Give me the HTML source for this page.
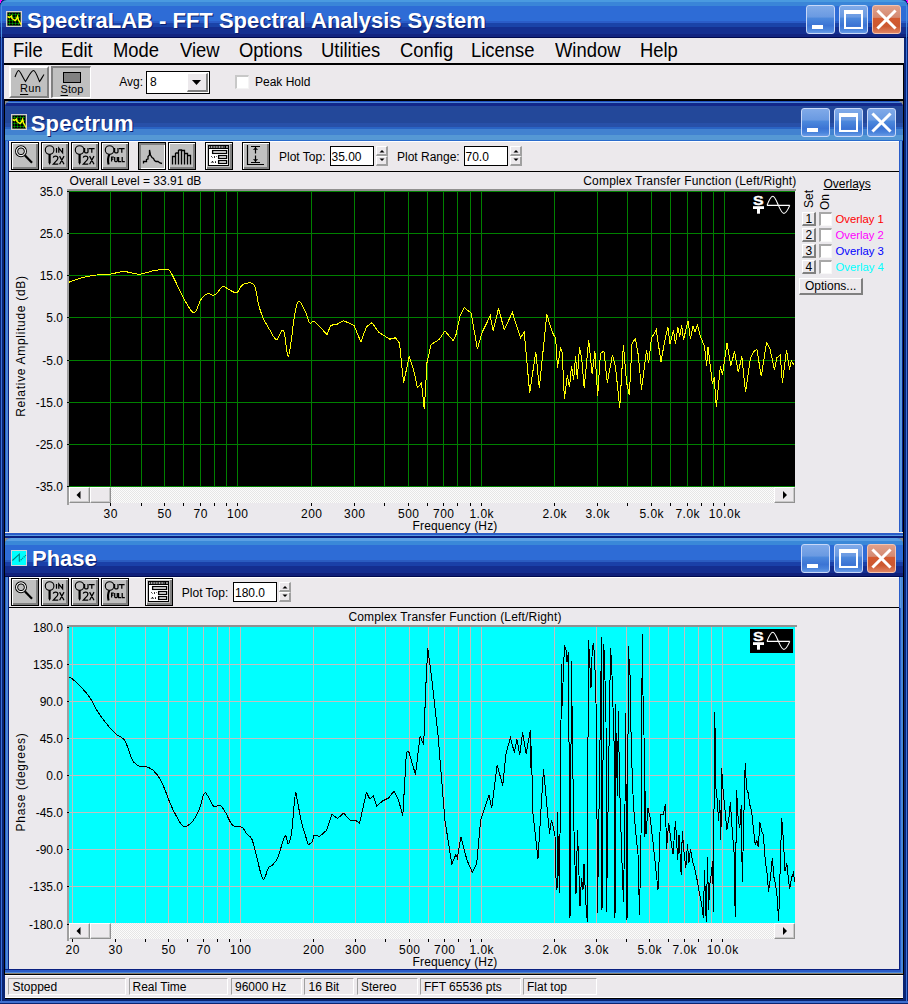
<!DOCTYPE html><html><head><meta charset="utf-8"><style>
html,body{margin:0;padding:0;}body{width:908px;height:1004px;overflow:hidden;position:relative;background:#0a2472;font-family:"Liberation Sans",sans-serif;}
.t{position:absolute;white-space:nowrap;font-family:"Liberation Sans",sans-serif;}
.r{position:absolute;box-sizing:border-box;}
svg.a{position:absolute;overflow:visible;}
.rz{position:absolute;box-sizing:border-box;background:#c0c0c0;border:1px solid #000;box-shadow:inset 1px 1px 0 #fff,inset -2px -2px 0 #808080;}
.pz{position:absolute;box-sizing:border-box;background:#c0c0c0;border:1px solid #000;box-shadow:inset 2px 2px 0 #808080,inset -1px -1px 0 #fff;}
.edit{position:absolute;box-sizing:border-box;background:#fff;border:1px solid #000;}
.sunk{position:absolute;box-sizing:border-box;border-top:1px solid #a0a0a0;border-left:1px solid #a0a0a0;border-bottom:1px solid #fff;border-right:1px solid #fff;}
.sb{position:absolute;box-sizing:border-box;background:#ece9ec;border-left:1px solid #fff;border-top:1px solid #fff;border-right:1px solid #909090;border-bottom:1px solid #909090;box-shadow:inset -1px -1px 0 #c8c8c8;}
.xb{position:absolute;box-sizing:border-box;border:1px solid #c8d8f8;border-radius:3px;}
</style></head><body>
<div class="r" style="left:0px;top:0px;width:908px;height:1004px;background:#0a2472;"></div>
<div class="r" style="left:1px;top:38px;width:1px;height:963px;background:#3a70d8;"></div>
<div class="r" style="left:906px;top:38px;width:1px;height:963px;background:#3a70d8;"></div>
<div class="r" style="left:0px;top:1001px;width:908px;height:2px;background:#4070d0;"></div>
<div class="r" style="left:4px;top:101px;width:1px;height:874px;background:#000;"></div>
<div class="r" style="left:903px;top:101px;width:1px;height:874px;background:#000;"></div>
<div class="r" style="left:0px;top:0px;width:908px;height:38px;border-radius:7px 7px 0 0;background:linear-gradient(to bottom,#4a9ae0 0px,#4a9ae0 2px,#3a85d8 2px,#3a85d8 6px,#2e6cd6 6px,#2e6cd6 21px,#2a5cc8 21px,#2a5cc8 23px,#1a43a8 23px,#1a43a8 27px,#142f90 27px,#142f90 34px,#122480 34px,#122480 37px,#000a50 37px,#000a50 38px);"></div>
<div class="r" style="left:1px;top:5px;width:1px;height:33px;background:#4a90e0;"></div>
<div class="r" style="left:906px;top:5px;width:1px;height:33px;background:#4a90e0;"></div>
<div class="r" style="left:0px;top:0px;width:2px;height:1px;background:#f0f;"></div>
<div class="r" style="left:0px;top:1px;width:1px;height:2px;background:#f0f;"></div>
<div class="r" style="left:906px;top:0px;width:2px;height:1px;background:#f0f;"></div>
<div class="r" style="left:907px;top:1px;width:1px;height:2px;background:#f0f;"></div>
<svg class="a" style="left:6px;top:11px;" width="16" height="16" viewBox="0 0 16 16"><rect x="0" y="0" width="16" height="16" fill="#d4d0d0"/><rect x="1" y="1" width="14" height="14" fill="#909090"/><rect x="1.5" y="1.5" width="13" height="13" fill="#000"/><line x1="3.5" y1="1.5" x2="3.5" y2="14.5" stroke="#00a000" stroke-width="1" stroke-dasharray="1 0.5"/><line x1="1.5" y1="3.5" x2="14.5" y2="3.5" stroke="#00a000" stroke-width="1" stroke-dasharray="1 0.5"/><line x1="6.5" y1="1.5" x2="6.5" y2="14.5" stroke="#00a000" stroke-width="1" stroke-dasharray="1 0.5"/><line x1="1.5" y1="6.5" x2="14.5" y2="6.5" stroke="#00a000" stroke-width="1" stroke-dasharray="1 0.5"/><line x1="9.5" y1="1.5" x2="9.5" y2="14.5" stroke="#00a000" stroke-width="1" stroke-dasharray="1 0.5"/><line x1="1.5" y1="9.5" x2="14.5" y2="9.5" stroke="#00a000" stroke-width="1" stroke-dasharray="1 0.5"/><line x1="12.5" y1="1.5" x2="12.5" y2="14.5" stroke="#00a000" stroke-width="1" stroke-dasharray="1 0.5"/><line x1="1.5" y1="12.5" x2="14.5" y2="12.5" stroke="#00a000" stroke-width="1" stroke-dasharray="1 0.5"/><polyline points="1.5,5.5 3.5,6.5 5.5,5 6,7.5 7.5,8.5 9,9.5 10.5,8 11.5,5.5 12.5,9 14,11.5 15,13.5" fill="none" stroke="#ffff00" stroke-width="1.4"/></svg>
<div class="t" style="left:27px;top:9.98px;font-size:22px;line-height:22px;color:#fff;font-weight:bold;text-shadow:1px 1px 0 #0a1e6e;">SpectraLAB - FFT Spectral Analysis System</div>
<div class="xb" style="left:806px;top:5px;width:29px;height:29px;background:linear-gradient(to bottom,#80aae8 0%,#6a9ae2 40%,#4c88dc 46%,#3c74d4 72%,#4a84dc 88%,#6a9ce6 100%);"></div>
<div class="r" style="left:812px;top:25px;width:11px;height:4px;background:#fff;"></div>
<div class="xb" style="left:839px;top:5px;width:29px;height:29px;background:linear-gradient(to bottom,#80aae8 0%,#6a9ae2 40%,#4c88dc 46%,#3c74d4 72%,#4a84dc 88%,#6a9ce6 100%);"></div>
<div class="r" style="left:844px;top:10px;width:19px;height:19px;border:2px solid #fff;border-top-width:4px;"></div>
<div class="xb" style="left:872px;top:5px;width:29px;height:29px;background:linear-gradient(to bottom,#e0a08a 0%,#d48a72 42%,#d45a30 46%,#cc5830 75%,#e08462 100%);border-color:#f4c4b0;"></div>
<svg class="a" style="left:876px;top:9px;" width="21" height="21" viewBox="0 0 21 21"><path d="M2.5 2.5 L18.5 18.5 M18.5 2.5 L2.5 18.5" stroke="#fff" stroke-width="3" stroke-linecap="square"/></svg>
<div class="r" style="left:4px;top:38px;width:900px;height:25px;background:#ece9ec;"></div>
<div class="r" style="left:4px;top:63px;width:900px;height:2px;background:#000;"></div>
<div class="t" style="left:12.5px;top:39.97px;font-size:20px;line-height:20px;color:#000;transform:scaleX(0.92);transform-origin:0 0;">File</div>
<div class="t" style="left:60.5px;top:39.97px;font-size:20px;line-height:20px;color:#000;transform:scaleX(0.92);transform-origin:0 0;">Edit</div>
<div class="t" style="left:112.5px;top:39.97px;font-size:20px;line-height:20px;color:#000;transform:scaleX(0.92);transform-origin:0 0;">Mode</div>
<div class="t" style="left:180.0px;top:39.97px;font-size:20px;line-height:20px;color:#000;transform:scaleX(0.92);transform-origin:0 0;">View</div>
<div class="t" style="left:238.5px;top:39.97px;font-size:20px;line-height:20px;color:#000;transform:scaleX(0.92);transform-origin:0 0;">Options</div>
<div class="t" style="left:321.0px;top:39.97px;font-size:20px;line-height:20px;color:#000;transform:scaleX(0.92);transform-origin:0 0;">Utilities</div>
<div class="t" style="left:399.5px;top:39.97px;font-size:20px;line-height:20px;color:#000;transform:scaleX(0.92);transform-origin:0 0;">Config</div>
<div class="t" style="left:471.0px;top:39.97px;font-size:20px;line-height:20px;color:#000;transform:scaleX(0.92);transform-origin:0 0;">License</div>
<div class="t" style="left:555.0px;top:39.97px;font-size:20px;line-height:20px;color:#000;transform:scaleX(0.92);transform-origin:0 0;">Window</div>
<div class="t" style="left:639.5px;top:39.97px;font-size:20px;line-height:20px;color:#000;transform:scaleX(0.92);transform-origin:0 0;">Help</div>
<div class="r" style="left:4px;top:65px;width:900px;height:34px;background:#ece9ec;border-right:1px solid #000;"></div>
<div class="r" style="left:4px;top:99px;width:900px;height:2px;background:#000;"></div>
<div class="r" style="left:9px;top:66px;width:40px;height:32px;background:#c0c0c0;border-top:2px solid #fff;border-left:2px solid #fff;border-bottom:2px solid #808080;border-right:2px solid #808080;"></div>
<svg class="a" style="left:9px;top:66px;" width="40" height="20" viewBox="0 0 40 20"><path d="M6 11 C7.5 7, 8.5 4.5, 9.5 4.5 C11 4.5, 14 12, 16.5 15.5 C19 12, 22 4.5, 24.5 4.5 C26.5 4.5, 29 12, 30.5 15.5 C32 14, 33.5 10.5, 35 8.5" fill="none" stroke="#000" stroke-width="1.1"/></svg>
<div class="t" style="left:20px;top:83.29px;font-size:11px;line-height:11px;color:#000;letter-spacing:0.3px;"><u style="text-underline-offset:1.5px">R</u>un</div>
<div class="r" style="left:51px;top:66px;width:40px;height:32px;background:#c0c0c0;border-top:2px solid #808080;border-left:2px solid #808080;border-bottom:1px solid #fff;border-right:1px solid #fff;"></div>
<div class="r" style="left:63px;top:72px;width:18px;height:11px;background:#808080;border:1px solid #000;"></div>
<div class="t" style="left:60.5px;top:84.09px;font-size:11px;line-height:11px;color:#000;letter-spacing:0.1px;"><u style="text-underline-offset:1.5px">S</u>top</div>
<div class="t" style="left:119.2px;top:76.34px;font-size:12px;line-height:12px;color:#000;">Avg:</div>
<div class="edit" style="left:146px;top:71px;width:64px;height:23px;"></div>
<div class="t" style="left:150px;top:76.34px;font-size:12px;line-height:12px;color:#000;">8</div>
<div class="r" style="left:187px;top:73px;width:21px;height:19px;background:#ece9ec;border-top:1px solid #fff;border-left:1px solid #fff;border-bottom:2px solid #808080;border-right:2px solid #808080;"></div>
<svg class="a" style="left:191px;top:79px;" width="12" height="8" viewBox="0 0 12 8"><path d="M1 1 L10 1 L5.5 6 Z" fill="#000"/></svg>
<div class="r" style="left:235px;top:75px;width:14px;height:14px;background:#fff;border-top:2px solid #c8c8c8;border-left:2px solid #c8c8c8;border-bottom:1px solid #f4f4f4;border-right:1px solid #f4f4f4;"></div>
<div class="t" style="left:255px;top:76.34px;font-size:12px;line-height:12px;color:#000;">Peak Hold</div>
<div class="r" style="left:5px;top:101px;width:6px;height:6px;background:#8c8c8c;"></div>
<div class="r" style="left:897px;top:101px;width:6px;height:6px;background:#8c8c8c;"></div>
<div class="r" style="left:5px;top:107px;width:898px;height:431px;background:#2a5cc8;"></div>
<div class="r" style="left:5px;top:101px;width:898px;height:20px;background:#2a5cc8;border-radius:6px 6px 0 0;"></div>
<div class="r" style="left:6px;top:107px;width:2px;height:431px;background:#4a88d8;"></div>
<div class="r" style="left:8px;top:107px;width:1px;height:431px;background:#0a2080;"></div>
<div class="r" style="left:900px;top:107px;width:2px;height:431px;background:#5a9ae0;"></div>
<div class="r" style="left:902px;top:107px;width:1px;height:431px;background:#0a2080;"></div>
<div class="r" style="left:5px;top:101px;width:898px;height:40px;border-radius:6px 6px 0 0;background:linear-gradient(to bottom,#2050c0 0px,#2050c0 1px,#4a88d8 1px,#4a88d8 2px,#12288a 2px,#12288a 5px,#23489a 5px,#23489a 22px,#2850a8 22px,#2850a8 26px,#2a64c4 26px,#2a64c4 28px,#4282d0 28px,#4282d0 34px,#5598d4 34px,#5598d4 39px,#2a6ccc 39px,#2a6ccc 40px);"></div>
<svg class="a" style="left:11px;top:114px;" width="16" height="16" viewBox="0 0 16 16"><rect x="0" y="0" width="16" height="16" fill="#d4d0d0"/><rect x="1" y="1" width="14" height="14" fill="#909090"/><rect x="1.5" y="1.5" width="13" height="13" fill="#000"/><line x1="3.5" y1="1.5" x2="3.5" y2="14.5" stroke="#00a000" stroke-width="1" stroke-dasharray="1 0.5"/><line x1="1.5" y1="3.5" x2="14.5" y2="3.5" stroke="#00a000" stroke-width="1" stroke-dasharray="1 0.5"/><line x1="6.5" y1="1.5" x2="6.5" y2="14.5" stroke="#00a000" stroke-width="1" stroke-dasharray="1 0.5"/><line x1="1.5" y1="6.5" x2="14.5" y2="6.5" stroke="#00a000" stroke-width="1" stroke-dasharray="1 0.5"/><line x1="9.5" y1="1.5" x2="9.5" y2="14.5" stroke="#00a000" stroke-width="1" stroke-dasharray="1 0.5"/><line x1="1.5" y1="9.5" x2="14.5" y2="9.5" stroke="#00a000" stroke-width="1" stroke-dasharray="1 0.5"/><line x1="12.5" y1="1.5" x2="12.5" y2="14.5" stroke="#00a000" stroke-width="1" stroke-dasharray="1 0.5"/><line x1="1.5" y1="12.5" x2="14.5" y2="12.5" stroke="#00a000" stroke-width="1" stroke-dasharray="1 0.5"/><polyline points="1.5,5.5 3.5,6.5 5.5,5 6,7.5 7.5,8.5 9,9.5 10.5,8 11.5,5.5 12.5,9 14,11.5 15,13.5" fill="none" stroke="#ffff00" stroke-width="1.4"/></svg>
<div class="t" style="left:30.7px;top:113.38px;font-size:22px;line-height:22px;color:#fff;font-weight:bold;text-shadow:1px 1px 0 #0a1e6e;letter-spacing:0.2px;">Spectrum</div>
<div class="xb" style="left:801px;top:108px;width:29px;height:29px;background:linear-gradient(to bottom,#80aae8 0%,#6a9ae2 40%,#4c88dc 46%,#3c74d4 72%,#4a84dc 88%,#6a9ce6 100%);"></div>
<div class="r" style="left:807px;top:128px;width:11px;height:4px;background:#fff;"></div>
<div class="xb" style="left:834px;top:108px;width:29px;height:29px;background:linear-gradient(to bottom,#80aae8 0%,#6a9ae2 40%,#4c88dc 46%,#3c74d4 72%,#4a84dc 88%,#6a9ce6 100%);"></div>
<div class="r" style="left:839px;top:113px;width:19px;height:19px;border:2px solid #fff;border-top-width:4px;"></div>
<div class="xb" style="left:867px;top:108px;width:29px;height:29px;background:linear-gradient(to bottom,#80aae8 0%,#6a9ae2 40%,#4c88dc 46%,#3c74d4 72%,#4a84dc 88%,#6a9ce6 100%);"></div>
<svg class="a" style="left:871px;top:112px;" width="21" height="21" viewBox="0 0 21 21"><path d="M2.5 2.5 L18.5 18.5 M18.5 2.5 L2.5 18.5" stroke="#fff" stroke-width="3" stroke-linecap="square"/></svg>
<div class="r" style="left:9px;top:141px;width:890px;height:31px;background:#ece9ec;border-top:1px solid #fff;"></div>
<div class="r" style="left:9px;top:171px;width:890px;height:1px;background:#000;"></div>
<div class="r" style="left:9px;top:172px;width:890px;height:360px;background:#ebe9ed;"></div>
<div class="r" style="left:5px;top:532px;width:898px;height:1px;background:#f4ece8;"></div>
<div class="r" style="left:5px;top:533px;width:898px;height:2px;background:#2a5cc8;"></div>
<div class="r" style="left:5px;top:535px;width:898px;height:1px;background:#5a9ae0;"></div>
<div class="r" style="left:5px;top:536px;width:898px;height:2px;background:#0a2080;"></div>
<div class="r" style="left:5px;top:538px;width:6px;height:6px;background:#8c8c8c;"></div>
<div class="r" style="left:897px;top:538px;width:6px;height:6px;background:#8c8c8c;"></div>
<div class="r" style="left:5px;top:544px;width:898px;height:430px;background:#2a5cc8;"></div>
<div class="r" style="left:5px;top:538px;width:898px;height:20px;background:#2a5cc8;border-radius:6px 6px 0 0;"></div>
<div class="r" style="left:6px;top:544px;width:2px;height:430px;background:#4a88d8;"></div>
<div class="r" style="left:8px;top:544px;width:1px;height:430px;background:#0a2080;"></div>
<div class="r" style="left:900px;top:544px;width:2px;height:430px;background:#5a9ae0;"></div>
<div class="r" style="left:902px;top:544px;width:1px;height:430px;background:#0a2080;"></div>
<div class="r" style="left:5px;top:538px;width:898px;height:39px;border-radius:6px 6px 0 0;background:linear-gradient(to bottom,#5aa0e4 0px,#5aa0e4 3px,#3a88d8 3px,#3a88d8 7px,#2e6cd6 7px,#2e6cd6 22px,#2a5cc0 22px,#2a5cc0 24px,#1a40a8 24px,#1a40a8 28px,#142e90 28px,#142e90 35px,#10207a 35px,#10207a 38px,#000a50 38px,#000a50 39px);"></div>
<div class="t" style="left:32px;top:548.38px;font-size:22px;line-height:22px;color:#fff;font-weight:bold;text-shadow:1px 1px 0 #0a1e6e;">Phase</div>
<div class="xb" style="left:801px;top:544px;width:29px;height:29px;background:linear-gradient(to bottom,#80aae8 0%,#6a9ae2 40%,#4c88dc 46%,#3c74d4 72%,#4a84dc 88%,#6a9ce6 100%);"></div>
<div class="r" style="left:807px;top:564px;width:11px;height:4px;background:#fff;"></div>
<div class="xb" style="left:834px;top:544px;width:29px;height:29px;background:linear-gradient(to bottom,#80aae8 0%,#6a9ae2 40%,#4c88dc 46%,#3c74d4 72%,#4a84dc 88%,#6a9ce6 100%);"></div>
<div class="r" style="left:839px;top:549px;width:19px;height:19px;border:2px solid #fff;border-top-width:4px;"></div>
<div class="xb" style="left:867px;top:544px;width:29px;height:29px;background:linear-gradient(to bottom,#e0a08a 0%,#d48a72 42%,#d45a30 46%,#cc5830 75%,#e08462 100%);border-color:#f4c4b0;"></div>
<svg class="a" style="left:871px;top:548px;" width="21" height="21" viewBox="0 0 21 21"><path d="M2.5 2.5 L18.5 18.5 M18.5 2.5 L2.5 18.5" stroke="#fff" stroke-width="3" stroke-linecap="square"/></svg>
<div class="r" style="left:9px;top:577px;width:890px;height:31px;background:#ece9ec;border-top:1px solid #fff;"></div>
<div class="r" style="left:9px;top:607px;width:890px;height:1px;background:#000;"></div>
<div class="r" style="left:9px;top:608px;width:890px;height:361px;background:#ebe9ed;"></div>
<div class="r" style="left:5px;top:969px;width:898px;height:1px;background:#0a2080;"></div>
<div class="r" style="left:5px;top:970px;width:898px;height:2px;background:#2a5cc8;"></div>
<div class="r" style="left:5px;top:972px;width:898px;height:1px;background:#4a88d8;"></div>
<div class="r" style="left:5px;top:973px;width:898px;height:1px;background:#8a8070;"></div>
<div class="r" style="left:899px;top:608px;width:1px;height:362px;background:#0a2080;"></div>
<div class="r" style="left:900px;top:608px;width:1px;height:364px;background:#2a5cc8;"></div>
<div class="r" style="left:901px;top:577px;width:2px;height:396px;background:#4a88d8;"></div>
<svg class="a" style="left:11px;top:550px;" width="16" height="16" viewBox="0 0 16 16"><rect x="0" y="0" width="16" height="16" fill="#d8d4d4"/><rect x="1" y="1" width="14" height="14" fill="#0ff"/><polyline points="1.4,10.5 8.3,4.2 8.3,11.4" fill="none" stroke="#008080" stroke-width="1.1"/><path d="M8.3 11.4 L14.9 5.2" stroke="#008080" stroke-width="1.2" stroke-dasharray="1.2 0.8"/></svg>
<div class="r" style="left:67px;top:189px;width:729px;height:2px;background:#909090;"></div>
<div class="r" style="left:67px;top:189px;width:2px;height:316px;background:#a0a0a0;"></div>
<div class="r" style="left:69px;top:191px;width:726px;height:296px;background:#000;"></div>
<svg class="a" style="left:69px;top:191px;shape-rendering:crispEdges;" width="726" height="296" viewBox="0 0 726 296"><rect x="0" y="0" width="726" height="1" fill="#008000"/><rect x="0" y="42" width="726" height="1" fill="#008000"/><rect x="0" y="84" width="726" height="1" fill="#008000"/><rect x="0" y="126" width="726" height="1" fill="#008000"/><rect x="0" y="169" width="726" height="1" fill="#008000"/><rect x="0" y="211" width="726" height="1" fill="#008000"/><rect x="0" y="253" width="726" height="1" fill="#008000"/><rect x="0" y="295" width="726" height="1" fill="#008000"/><rect x="41" y="0" width="1" height="296" fill="#008000"/><rect x="72" y="0" width="1" height="296" fill="#008000"/><rect x="95" y="0" width="1" height="296" fill="#008000"/><rect x="114" y="0" width="1" height="296" fill="#008000"/><rect x="131" y="0" width="1" height="296" fill="#008000"/><rect x="145" y="0" width="1" height="296" fill="#008000"/><rect x="157" y="0" width="1" height="296" fill="#008000"/><rect x="168" y="0" width="1" height="296" fill="#008000"/><rect x="242" y="0" width="1" height="296" fill="#008000"/><rect x="285" y="0" width="1" height="296" fill="#008000"/><rect x="315" y="0" width="1" height="296" fill="#008000"/><rect x="339" y="0" width="1" height="296" fill="#008000"/><rect x="358" y="0" width="1" height="296" fill="#008000"/><rect x="374" y="0" width="1" height="296" fill="#008000"/><rect x="388" y="0" width="1" height="296" fill="#008000"/><rect x="401" y="0" width="1" height="296" fill="#008000"/><rect x="412" y="0" width="1" height="296" fill="#008000"/><rect x="485" y="0" width="1" height="296" fill="#008000"/><rect x="528" y="0" width="1" height="296" fill="#008000"/><rect x="558" y="0" width="1" height="296" fill="#008000"/><rect x="582" y="0" width="1" height="296" fill="#008000"/><rect x="601" y="0" width="1" height="296" fill="#008000"/><rect x="618" y="0" width="1" height="296" fill="#008000"/><rect x="632" y="0" width="1" height="296" fill="#008000"/><rect x="644" y="0" width="1" height="296" fill="#008000"/><rect x="655" y="0" width="1" height="296" fill="#008000"/></svg>
<div class="r" style="left:69px;top:487px;width:726px;height:16px;background-color:#f4f4f4;background-image:repeating-conic-gradient(#fcfcfc 0 25%,#e6e6e6 0 50%);background-size:2px 2px;"></div>
<div class="sb" style="left:69px;top:487px;width:21px;height:16px;"></div>
<div class="sb" style="left:90px;top:487px;width:21px;height:16px;"></div>
<div class="sb" style="left:774px;top:487px;width:21px;height:16px;"></div>
<svg class="a" style="left:76px;top:491px;" width="6" height="8" viewBox="0 0 6 8"><path d="M4.5 0 L4.5 8 L0.5 4 Z" fill="#000"/></svg>
<svg class="a" style="left:781.5px;top:491px;" width="6" height="8" viewBox="0 0 6 8"><path d="M1 0 L1 8 L5 4 Z" fill="#000"/></svg>
<svg class="a" style="left:60px;top:503px;" width="740" height="3" viewBox="0 0 740 3"><rect x="50" y="0" width="1" height="3" fill="#000"/><rect x="81" y="0" width="1" height="3" fill="#000"/><rect x="104" y="0" width="1" height="3" fill="#000"/><rect x="123" y="0" width="1" height="3" fill="#000"/><rect x="140" y="0" width="1" height="3" fill="#000"/><rect x="154" y="0" width="1" height="3" fill="#000"/><rect x="166" y="0" width="1" height="3" fill="#000"/><rect x="177" y="0" width="1" height="3" fill="#000"/><rect x="251" y="0" width="1" height="3" fill="#000"/><rect x="294" y="0" width="1" height="3" fill="#000"/><rect x="324" y="0" width="1" height="3" fill="#000"/><rect x="348" y="0" width="1" height="3" fill="#000"/><rect x="367" y="0" width="1" height="3" fill="#000"/><rect x="383" y="0" width="1" height="3" fill="#000"/><rect x="397" y="0" width="1" height="3" fill="#000"/><rect x="410" y="0" width="1" height="3" fill="#000"/><rect x="421" y="0" width="1" height="3" fill="#000"/><rect x="494" y="0" width="1" height="3" fill="#000"/><rect x="537" y="0" width="1" height="3" fill="#000"/><rect x="567" y="0" width="1" height="3" fill="#000"/><rect x="591" y="0" width="1" height="3" fill="#000"/><rect x="610" y="0" width="1" height="3" fill="#000"/><rect x="627" y="0" width="1" height="3" fill="#000"/><rect x="641" y="0" width="1" height="3" fill="#000"/><rect x="653" y="0" width="1" height="3" fill="#000"/><rect x="664" y="0" width="1" height="3" fill="#000"/></svg>
<div class="t" style="left:63px;top:186.14px;font-size:12px;line-height:12px;color:#000;transform:translateX(-100%);">35.0</div>
<div class="t" style="left:63px;top:228.14px;font-size:12px;line-height:12px;color:#000;transform:translateX(-100%);">25.0</div>
<div class="t" style="left:63px;top:270.14px;font-size:12px;line-height:12px;color:#000;transform:translateX(-100%);">15.0</div>
<div class="t" style="left:63px;top:312.14px;font-size:12px;line-height:12px;color:#000;transform:translateX(-100%);">5.0</div>
<div class="t" style="left:63px;top:355.14px;font-size:12px;line-height:12px;color:#000;transform:translateX(-100%);">-5.0</div>
<div class="t" style="left:63px;top:397.14px;font-size:12px;line-height:12px;color:#000;transform:translateX(-100%);">-15.0</div>
<div class="t" style="left:63px;top:439.14px;font-size:12px;line-height:12px;color:#000;transform:translateX(-100%);">-25.0</div>
<div class="t" style="left:63px;top:481.14px;font-size:12px;line-height:12px;color:#000;transform:translateX(-100%);">-35.0</div>
<div class="t" style="left:110.75px;top:508.14px;font-size:12px;line-height:12px;color:#000;transform:translateX(-50%);letter-spacing:0.5px;">30</div>
<div class="t" style="left:164.75px;top:508.14px;font-size:12px;line-height:12px;color:#000;transform:translateX(-50%);letter-spacing:0.5px;">50</div>
<div class="t" style="left:200.75px;top:508.14px;font-size:12px;line-height:12px;color:#000;transform:translateX(-50%);letter-spacing:0.5px;">70</div>
<div class="t" style="left:237.75px;top:508.14px;font-size:12px;line-height:12px;color:#000;transform:translateX(-50%);letter-spacing:0.5px;">100</div>
<div class="t" style="left:311.75px;top:508.14px;font-size:12px;line-height:12px;color:#000;transform:translateX(-50%);letter-spacing:0.5px;">200</div>
<div class="t" style="left:354.75px;top:508.14px;font-size:12px;line-height:12px;color:#000;transform:translateX(-50%);letter-spacing:0.5px;">300</div>
<div class="t" style="left:408.75px;top:508.14px;font-size:12px;line-height:12px;color:#000;transform:translateX(-50%);letter-spacing:0.5px;">500</div>
<div class="t" style="left:443.75px;top:508.14px;font-size:12px;line-height:12px;color:#000;transform:translateX(-50%);letter-spacing:0.5px;">700</div>
<div class="t" style="left:481.75px;top:508.14px;font-size:12px;line-height:12px;color:#000;transform:translateX(-50%);letter-spacing:0.5px;">1.0k</div>
<div class="t" style="left:554.75px;top:508.14px;font-size:12px;line-height:12px;color:#000;transform:translateX(-50%);letter-spacing:0.5px;">2.0k</div>
<div class="t" style="left:597.75px;top:508.14px;font-size:12px;line-height:12px;color:#000;transform:translateX(-50%);letter-spacing:0.5px;">3.0k</div>
<div class="t" style="left:651.75px;top:508.14px;font-size:12px;line-height:12px;color:#000;transform:translateX(-50%);letter-spacing:0.5px;">5.0k</div>
<div class="t" style="left:687.75px;top:508.14px;font-size:12px;line-height:12px;color:#000;transform:translateX(-50%);letter-spacing:0.5px;">7.0k</div>
<div class="t" style="left:724.75px;top:508.14px;font-size:12px;line-height:12px;color:#000;transform:translateX(-50%);letter-spacing:0.5px;">10.0k</div>
<div class="t" style="left:455px;top:520.04px;font-size:12px;line-height:12px;color:#000;transform:translateX(-50%);letter-spacing:0.17px;">Frequency (Hz)</div>
<div class="t" style="left:69.6px;top:175.14px;font-size:12px;line-height:12px;color:#000;">Overall Level = 33.91 dB</div>
<div class="t" style="left:796.5px;top:175.14px;font-size:12px;line-height:12px;color:#000;transform:translateX(-100%);letter-spacing:0.17px;">Complex Transfer Function (Left/Right)</div>
<div class="t" style="left:20.5px;top:345.5px;font-size:12px;line-height:12px;letter-spacing:0.7px;transform:translate(-50%,-50%) rotate(-90deg);">Relative Amplitude (dB)</div>
<svg class="a" style="left:750px;top:193px;" width="43" height="24" viewBox="0 0 43 24"><text x="3" y="12" font-family="Liberation Sans" font-weight="bold" font-size="13" fill="#fff" stroke="#fff" stroke-width="0.4" transform="translate(3,0) scale(1.22,1) translate(-3,0)">S</text><rect x="3" y="13.2" width="11" height="2.8" fill="#fff"/><rect x="7" y="15.5" width="3" height="5.2" fill="#fff"/><path d="M17 12.4 H39.8 M17 12.4 C19 7, 21 3.2, 22.9 3.2 C24.8 3.2, 26.5 8, 28.4 12.4 C30.3 16.8, 32 20.4, 33.9 20.4 C35.8 20.4, 37.8 17, 39.8 12.4" fill="none" stroke="#fff" stroke-width="1.1"/></svg>
<div class="r" style="left:67px;top:191px;width:2px;height:1px;background:#000;"></div>
<div class="r" style="left:67px;top:233px;width:2px;height:1px;background:#000;"></div>
<div class="r" style="left:67px;top:275px;width:2px;height:1px;background:#000;"></div>
<div class="r" style="left:67px;top:317px;width:2px;height:1px;background:#000;"></div>
<div class="r" style="left:67px;top:360px;width:2px;height:1px;background:#000;"></div>
<div class="r" style="left:67px;top:402px;width:2px;height:1px;background:#000;"></div>
<div class="r" style="left:67px;top:444px;width:2px;height:1px;background:#000;"></div>
<div class="r" style="left:67px;top:486px;width:2px;height:1px;background:#000;"></div>
<svg class="a" style="left:69px;top:191px;overflow:hidden;" width="726" height="296" viewBox="0 0 726 296"><path d="M-0.80 91.50 C1.13 90.82 6.58 88.60 10.80 87.40 C15.02 86.20 19.47 85.00 24.50 84.30 C29.53 83.60 35.95 83.83 41.00 83.20 C46.05 82.57 49.97 80.50 54.80 80.50 C59.63 80.50 64.95 83.35 70.00 83.20 C75.05 83.05 80.75 80.33 85.10 79.60 C89.45 78.87 93.35 78.57 96.10 78.80 C98.85 79.03 98.38 76.03 101.60 81.00 C104.82 85.97 111.50 101.80 115.40 108.60 C119.30 115.40 122.25 121.80 125.00 121.80 C127.75 121.80 129.60 111.82 131.90 108.60 C134.20 105.38 136.73 103.20 138.80 102.50 C140.87 101.80 142.70 104.53 144.30 104.40 C145.90 104.27 146.80 103.17 148.40 101.70 C150.00 100.23 151.83 96.05 153.90 95.60 C155.97 95.15 158.50 97.98 160.80 99.00 C163.10 100.02 165.63 102.50 167.70 101.70 C169.77 100.90 171.13 95.82 173.20 94.20 C175.27 92.58 178.03 91.90 180.10 92.00 C182.17 92.10 184.00 91.13 185.60 94.80 C187.20 98.47 188.32 108.72 189.70 114.00 C191.08 119.28 192.07 122.37 193.90 126.50 C195.73 130.63 198.42 135.13 200.70 138.80 C202.98 142.47 205.30 148.40 207.60 148.50 C209.90 148.60 212.52 136.65 214.50 139.40 C216.48 142.15 217.67 167.40 219.50 165.00 C221.33 162.60 223.80 134.17 225.50 125.00 C227.20 115.83 227.87 110.67 229.70 110.00 C231.53 109.33 234.67 117.33 236.50 121.00 C238.33 124.67 239.27 130.45 240.70 132.00 C242.13 133.55 243.22 129.43 245.10 130.30 L252.00 137.20 L258.10 143.50 L261.60 134.40 L268.50 133.00 L274.60 129.70 L285.00 134.40 L291.90 151.00 L297.40 135.80 L303.00 131.70 L309.80 141.30 L320.80 148.20 L326.40 146.80 L330.50 152.30 L334.60 192.20 L340.10 165.50 L344.20 177.10 L348.40 196.40 L352.50 192.20 L355.30 218.40 L358.00 171.60 L362.10 153.70 L370.40 148.20 L375.90 139.90 L384.20 149.60 L386.90 144.00 L391.10 124.80 L395.20 116.50 L402.10 122.00 L408.40 157.80 L413.10 141.30 L421.30 124.80 L424.10 139.90 L429.60 117.10 L435.10 138.60 L439.20 130.30 L443.40 121.50 L446.10 130.30 L451.60 146.80 L455.20 141.30 L460.70 201.90 L466.80 160.60 L470.30 196.90 L477.80 123.40 L483.30 141.30 L486.70 147.50 L488.50 176.50 L491.50 157.20 L493.20 161.30 L495.40 208.10 L498.40 184.00 L500.50 196.40 L502.50 175.10 L504.60 188.80 L506.60 165.40 L508.30 188.20 L510.50 155.80 L512.80 168.20 L515.20 197.10 L519.70 148.90 L523.20 183.30 L525.90 159.90 L528.70 205.40 L531.40 162.70 L534.90 159.90 L538.30 191.60 L543.50 163.80 L546.60 176.50 L550.70 217.10 L554.40 153.70 L557.60 191.60 L560.30 204.00 L563.10 151.70 L566.50 148.00 L569.30 164.10 L572.50 198.50 L577.50 159.20 L579.60 172.30 L582.40 147.50 L587.20 138.60 L592.00 170.90 L595.40 151.70 L598.90 135.80 L601.00 153.10 L604.40 139.30 L606.50 153.10 L608.80 135.80 L610.80 145.50 L612.60 133.80 L614.50 148.90 L619.10 129.60 L621.40 148.20 L623.90 135.20 L626.00 140.70 L628.30 133.80 L631.50 145.50 L635.60 155.80 L637.70 175.10 L639.00 155.80 L643.40 193.00 L645.20 186.10 L647.30 215.70 L651.40 175.10 L653.50 184.00 L658.00 151.70 L661.80 175.10 L665.50 160.60 L669.30 181.30 L672.80 165.40 L676.50 201.20 L681.40 167.50 L684.50 160.60 L687.90 158.60 L692.30 185.40 L697.50 151.70 L701.00 157.90 L705.40 178.50 L707.90 166.80 L711.30 164.10 L713.40 191.60 L717.50 158.60 L720.50 178.50 L722.30 169.60 L724.70 173.70" fill="none" stroke="#ffff00" stroke-width="1" shape-rendering="crispEdges"/></svg>
<div class="r" style="left:67px;top:625px;width:730px;height:2px;background:#909090;"></div>
<div class="r" style="left:67px;top:625px;width:2px;height:316px;background:#a0a0a0;"></div>
<div class="r" style="left:69px;top:627px;width:726px;height:296px;background:#0ff;"></div>
<svg class="a" style="left:69px;top:627px;shape-rendering:crispEdges;" width="726" height="296" viewBox="0 0 726 296"><rect x="0" y="37" width="726" height="1" fill="#c0c0c0"/><rect x="0" y="74" width="726" height="1" fill="#c0c0c0"/><rect x="0" y="111" width="726" height="1" fill="#c0c0c0"/><rect x="0" y="148" width="726" height="1" fill="#c0c0c0"/><rect x="0" y="185" width="726" height="1" fill="#c0c0c0"/><rect x="0" y="222" width="726" height="1" fill="#c0c0c0"/><rect x="0" y="259" width="726" height="1" fill="#c0c0c0"/><rect x="3" y="0" width="1" height="296" fill="#c0c0c0"/><rect x="46" y="0" width="1" height="296" fill="#c0c0c0"/><rect x="76" y="0" width="1" height="296" fill="#c0c0c0"/><rect x="99" y="0" width="1" height="296" fill="#c0c0c0"/><rect x="118" y="0" width="1" height="296" fill="#c0c0c0"/><rect x="134" y="0" width="1" height="296" fill="#c0c0c0"/><rect x="148" y="0" width="1" height="296" fill="#c0c0c0"/><rect x="160" y="0" width="1" height="296" fill="#c0c0c0"/><rect x="171" y="0" width="1" height="296" fill="#c0c0c0"/><rect x="244" y="0" width="1" height="296" fill="#c0c0c0"/><rect x="286" y="0" width="1" height="296" fill="#c0c0c0"/><rect x="316" y="0" width="1" height="296" fill="#c0c0c0"/><rect x="340" y="0" width="1" height="296" fill="#c0c0c0"/><rect x="359" y="0" width="1" height="296" fill="#c0c0c0"/><rect x="375" y="0" width="1" height="296" fill="#c0c0c0"/><rect x="389" y="0" width="1" height="296" fill="#c0c0c0"/><rect x="401" y="0" width="1" height="296" fill="#c0c0c0"/><rect x="412" y="0" width="1" height="296" fill="#c0c0c0"/><rect x="485" y="0" width="1" height="296" fill="#c0c0c0"/><rect x="527" y="0" width="1" height="296" fill="#c0c0c0"/><rect x="557" y="0" width="1" height="296" fill="#c0c0c0"/><rect x="580" y="0" width="1" height="296" fill="#c0c0c0"/><rect x="599" y="0" width="1" height="296" fill="#c0c0c0"/><rect x="615" y="0" width="1" height="296" fill="#c0c0c0"/><rect x="629" y="0" width="1" height="296" fill="#c0c0c0"/><rect x="642" y="0" width="1" height="296" fill="#c0c0c0"/><rect x="653" y="0" width="1" height="296" fill="#c0c0c0"/></svg>
<div class="r" style="left:69px;top:923px;width:726px;height:16px;background-color:#f4f4f4;background-image:repeating-conic-gradient(#fcfcfc 0 25%,#e6e6e6 0 50%);background-size:2px 2px;"></div>
<div class="sb" style="left:69px;top:923px;width:21px;height:16px;"></div>
<div class="sb" style="left:90px;top:923px;width:21px;height:16px;"></div>
<div class="sb" style="left:774px;top:923px;width:21px;height:16px;"></div>
<svg class="a" style="left:76px;top:927px;" width="6" height="8" viewBox="0 0 6 8"><path d="M4.5 0 L4.5 8 L0.5 4 Z" fill="#000"/></svg>
<svg class="a" style="left:781.5px;top:927px;" width="6" height="8" viewBox="0 0 6 8"><path d="M1 0 L1 8 L5 4 Z" fill="#000"/></svg>
<svg class="a" style="left:60px;top:939px;" width="740" height="3" viewBox="0 0 740 3"><rect x="12" y="0" width="1" height="3" fill="#000"/><rect x="55" y="0" width="1" height="3" fill="#000"/><rect x="85" y="0" width="1" height="3" fill="#000"/><rect x="108" y="0" width="1" height="3" fill="#000"/><rect x="127" y="0" width="1" height="3" fill="#000"/><rect x="143" y="0" width="1" height="3" fill="#000"/><rect x="157" y="0" width="1" height="3" fill="#000"/><rect x="169" y="0" width="1" height="3" fill="#000"/><rect x="180" y="0" width="1" height="3" fill="#000"/><rect x="253" y="0" width="1" height="3" fill="#000"/><rect x="295" y="0" width="1" height="3" fill="#000"/><rect x="325" y="0" width="1" height="3" fill="#000"/><rect x="349" y="0" width="1" height="3" fill="#000"/><rect x="368" y="0" width="1" height="3" fill="#000"/><rect x="384" y="0" width="1" height="3" fill="#000"/><rect x="398" y="0" width="1" height="3" fill="#000"/><rect x="410" y="0" width="1" height="3" fill="#000"/><rect x="421" y="0" width="1" height="3" fill="#000"/><rect x="494" y="0" width="1" height="3" fill="#000"/><rect x="536" y="0" width="1" height="3" fill="#000"/><rect x="566" y="0" width="1" height="3" fill="#000"/><rect x="589" y="0" width="1" height="3" fill="#000"/><rect x="608" y="0" width="1" height="3" fill="#000"/><rect x="624" y="0" width="1" height="3" fill="#000"/><rect x="638" y="0" width="1" height="3" fill="#000"/><rect x="651" y="0" width="1" height="3" fill="#000"/><rect x="662" y="0" width="1" height="3" fill="#000"/></svg>
<div class="t" style="left:63px;top:622.14px;font-size:12px;line-height:12px;color:#000;transform:translateX(-100%);">180.0</div>
<div class="t" style="left:63px;top:659.14px;font-size:12px;line-height:12px;color:#000;transform:translateX(-100%);">135.0</div>
<div class="t" style="left:63px;top:696.14px;font-size:12px;line-height:12px;color:#000;transform:translateX(-100%);">90.0</div>
<div class="t" style="left:63px;top:733.14px;font-size:12px;line-height:12px;color:#000;transform:translateX(-100%);">45.0</div>
<div class="t" style="left:63px;top:770.14px;font-size:12px;line-height:12px;color:#000;transform:translateX(-100%);">0.0</div>
<div class="t" style="left:63px;top:807.14px;font-size:12px;line-height:12px;color:#000;transform:translateX(-100%);">-45.0</div>
<div class="t" style="left:63px;top:844.14px;font-size:12px;line-height:12px;color:#000;transform:translateX(-100%);">-90.0</div>
<div class="t" style="left:63px;top:881.14px;font-size:12px;line-height:12px;color:#000;transform:translateX(-100%);">-135.0</div>
<div class="t" style="left:63px;top:919.14px;font-size:12px;line-height:12px;color:#000;transform:translateX(-100%);">-180.0</div>
<div class="t" style="left:72.75px;top:944.14px;font-size:12px;line-height:12px;color:#000;transform:translateX(-50%);letter-spacing:0.5px;">20</div>
<div class="t" style="left:115.75px;top:944.14px;font-size:12px;line-height:12px;color:#000;transform:translateX(-50%);letter-spacing:0.5px;">30</div>
<div class="t" style="left:168.75px;top:944.14px;font-size:12px;line-height:12px;color:#000;transform:translateX(-50%);letter-spacing:0.5px;">50</div>
<div class="t" style="left:203.75px;top:944.14px;font-size:12px;line-height:12px;color:#000;transform:translateX(-50%);letter-spacing:0.5px;">70</div>
<div class="t" style="left:240.75px;top:944.14px;font-size:12px;line-height:12px;color:#000;transform:translateX(-50%);letter-spacing:0.5px;">100</div>
<div class="t" style="left:313.75px;top:944.14px;font-size:12px;line-height:12px;color:#000;transform:translateX(-50%);letter-spacing:0.5px;">200</div>
<div class="t" style="left:355.75px;top:944.14px;font-size:12px;line-height:12px;color:#000;transform:translateX(-50%);letter-spacing:0.5px;">300</div>
<div class="t" style="left:409.75px;top:944.14px;font-size:12px;line-height:12px;color:#000;transform:translateX(-50%);letter-spacing:0.5px;">500</div>
<div class="t" style="left:444.75px;top:944.14px;font-size:12px;line-height:12px;color:#000;transform:translateX(-50%);letter-spacing:0.5px;">700</div>
<div class="t" style="left:481.75px;top:944.14px;font-size:12px;line-height:12px;color:#000;transform:translateX(-50%);letter-spacing:0.5px;">1.0k</div>
<div class="t" style="left:554.75px;top:944.14px;font-size:12px;line-height:12px;color:#000;transform:translateX(-50%);letter-spacing:0.5px;">2.0k</div>
<div class="t" style="left:596.75px;top:944.14px;font-size:12px;line-height:12px;color:#000;transform:translateX(-50%);letter-spacing:0.5px;">3.0k</div>
<div class="t" style="left:649.75px;top:944.14px;font-size:12px;line-height:12px;color:#000;transform:translateX(-50%);letter-spacing:0.5px;">5.0k</div>
<div class="t" style="left:684.75px;top:944.14px;font-size:12px;line-height:12px;color:#000;transform:translateX(-50%);letter-spacing:0.5px;">7.0k</div>
<div class="t" style="left:722.75px;top:944.14px;font-size:12px;line-height:12px;color:#000;transform:translateX(-50%);letter-spacing:0.5px;">10.0k</div>
<div class="t" style="left:455px;top:955.84px;font-size:12px;line-height:12px;color:#000;transform:translateX(-50%);letter-spacing:0.17px;">Frequency (Hz)</div>
<div class="t" style="left:348.4px;top:610.64px;font-size:12px;line-height:12px;color:#000;letter-spacing:0.17px;">Complex Transfer Function (Left/Right)</div>
<div class="t" style="left:21px;top:781.5px;font-size:12px;line-height:12px;letter-spacing:0.67px;transform:translate(-50%,-50%) rotate(-90deg);">Phase (degrees)</div>
<svg class="a" style="left:69px;top:627px;overflow:hidden;" width="726" height="296" viewBox="0 0 726 296"><path d="M0.30 50.90 C0.90 51.13 1.23 50.00 3.90 52.30 C6.57 54.60 13.08 61.03 16.30 64.70 C19.52 68.37 21.37 71.32 23.20 74.30 C25.03 77.28 24.78 78.70 27.30 82.60 C29.82 86.50 35.08 93.67 38.30 97.70 C41.52 101.73 43.85 104.37 46.60 106.80 C49.35 109.23 52.73 109.92 54.80 112.30 C56.87 114.68 57.53 117.57 59.00 121.10 C60.47 124.63 61.77 130.52 63.60 133.50 C65.43 136.48 67.33 137.85 70.00 139.00 C72.67 140.15 76.62 139.02 79.60 140.40 C82.58 141.78 85.38 144.08 87.90 147.30 C90.42 150.52 92.50 154.88 94.70 159.70 C96.90 164.52 99.03 171.38 101.10 176.20 C103.17 181.02 104.82 184.70 107.10 188.60 C109.38 192.50 112.03 198.68 114.80 199.60 C117.57 200.52 121.08 197.08 123.70 194.10 C126.32 191.12 128.45 186.43 130.50 181.70 C132.55 176.97 133.70 166.17 136.00 165.70 C138.30 165.23 141.77 176.78 144.30 178.90 C146.83 181.02 149.13 177.25 151.20 178.40 C153.27 179.55 154.63 182.50 156.70 185.80 C158.77 189.10 160.85 195.77 163.60 198.20 C166.35 200.63 170.92 199.02 173.20 200.40 C175.48 201.78 175.70 204.57 177.30 206.50 C178.90 208.43 181.18 208.57 182.80 212.00 C184.42 215.43 185.15 220.45 187.00 227.10 C188.85 233.75 191.83 249.60 193.90 251.90 C195.97 254.20 197.80 243.20 199.40 240.90 C201.00 238.60 201.90 239.93 203.50 238.10 C205.10 236.27 206.93 234.72 209.00 229.90 C211.07 225.08 214.15 211.37 215.90 209.20 C217.65 207.03 218.35 217.82 219.50 216.90 C220.65 215.98 221.57 212.23 222.80 203.70 C224.03 195.17 225.30 167.08 226.90 165.70 L232.40 195.40 L239.30 218.00 L243.40 214.70 L245.10 208.10 L250.60 209.50 L257.50 203.40 L263.00 187.50 L268.50 191.60 L274.60 186.10 L280.90 193.00 L286.40 193.00 L290.60 196.30 L297.40 165.40 L301.00 172.30 L304.30 168.70 L307.60 179.20 L314.00 173.70 L319.50 171.00 L325.00 164.10 L329.70 173.70 L333.80 188.80 L337.40 125.50 L339.60 124.10 L346.50 147.50 L351.10 109.00 L354.70 118.10 L356.60 63.60 L358.80 20.90 L363.50 58.10 L369.00 107.60 L375.90 193.00 L382.80 237.00 L386.90 227.40 L388.30 231.00 L391.90 210.00 L397.90 232.90 L403.40 245.30 L407.60 237.00 L411.70 193.00 L420.00 168.20 L422.70 181.40 L428.20 137.90 L433.70 158.60 L437.00 126.90 L441.40 110.40 L445.30 125.50 L448.00 112.60 L450.80 128.30 L453.60 105.40 L457.10 126.90 L461.30 103.50 L461.80 140.70 L462.60 118.60 L463.50 182.00 L469.00 231.50 L474.50 142.00 L480.50 206.70 L482.50 193.00 L484.00 199.00 L486.00 209.00 L487.00 251.00 L488.00 263.00 L488.50 185.00 L489.50 231.00 L490.50 266.00 L492.50 37.00 L493.50 79.00 L494.00 56.00 L495.50 18.00 L497.00 23.00 L498.00 35.00 L499.50 25.00 L501.00 291.00 L502.50 34.00 L503.50 120.00 L504.50 183.00 L505.50 224.00 L507.00 267.00 L508.50 203.00 L509.50 233.00 L511.00 279.00 L512.50 251.00 L514.00 263.00 L515.00 237.00 L517.00 278.00 L518.30 295.00 L519.40 13.00 L520.50 29.00 L521.50 52.00 L522.00 61.00 L522.50 41.00 L523.50 19.00 L524.50 17.00 L525.50 29.00 L526.50 56.00 L527.50 95.00 L528.50 286.00 L532.50 10.00 L533.00 283.00 L534.80 17.00 L536.00 53.00 L537.00 95.00 L537.50 285.00 L541.50 21.00 L542.50 35.00 L543.50 61.00 L544.50 98.00 L545.50 129.00 L546.00 291.00 L546.50 77.00 L547.50 132.00 L548.50 169.00 L549.30 84.00 L550.50 153.00 L552.00 205.00 L553.50 251.00 L554.50 275.00 L556.00 179.00 L556.50 86.00 L558.00 293.00 L559.50 19.00 L560.50 43.00 L561.50 52.00 L562.00 105.00 L563.50 158.00 L565.00 185.00 L567.00 208.00 L569.00 227.00 L570.50 288.00 L572.00 210.00 L573.30 7.00 L574.00 68.00 L575.00 108.00 L575.50 210.00 L576.00 163.00 L577.00 207.00 L579.00 181.00 L581.00 190.00 L584.00 215.00 L589.00 263.00 L590.50 222.00 L591.50 188.00 L594.50 187.00 L596.50 177.00 L597.50 222.00 L599.70 196.00 L602.00 214.00 L604.00 227.00 L606.50 194.00 L608.70 233.00 L610.00 208.00 L612.20 247.70 L613.30 204.50 L615.20 226.70 L616.80 240.70 L618.50 217.30 L619.90 236.00 L621.50 222.00 L623.90 236.00 L625.50 240.70 L628.50 254.70 L630.90 268.80 L632.50 275.80 L634.40 291.00 L635.50 243.00 L637.20 294.50 L638.60 230.20 L639.50 282.80 L640.90 257.00 L641.90 250.00 L643.70 233.70 L644.40 285.00 L645.60 85.20 L646.50 119.10 L646.10 156.50 L647.20 163.50 L648.40 175.20 L649.60 194.00 L650.70 173.00 L651.90 212.60 L652.60 141.30 L654.30 165.90 L656.60 189.30 L657.80 203.30 L660.10 189.30 L661.30 175.20 L663.60 208.00 L665.20 226.70 L666.20 289.80 L667.60 163.50 L669.00 189.30 L670.60 201.00 L671.50 195.00 L672.20 177.80 L673.30 255.20 L674.50 203.60 L676.20 135.60 L677.60 161.40 L679.20 166.10 L680.80 177.80 L682.70 184.90 L684.60 203.60 L686.20 217.70 L687.90 213.00 L689.30 220.00 L690.90 195.40 L692.60 203.60 L694.40 208.30 L696.30 234.10 L698.00 245.80 L699.60 264.50 L701.50 250.50 L703.30 230.60 L705.00 250.50 L706.60 257.50 L708.00 269.20 L709.70 293.80 L711.30 236.40 L712.70 190.70 L714.40 213.00 L716.00 243.50 L717.90 236.40 L719.00 248.10 L720.70 262.20 L722.60 250.50 L724.40 245.80 L725.80 255.20" fill="none" stroke="#000" stroke-width="1" shape-rendering="crispEdges"/></svg>
<svg class="a" style="left:750px;top:629px;" width="43" height="24" viewBox="0 0 43 24"><rect x="0" y="0" width="43" height="24" fill="#000"/><text x="3" y="12" font-family="Liberation Sans" font-weight="bold" font-size="13" fill="#fff" stroke="#fff" stroke-width="0.4" transform="translate(3,0) scale(1.22,1) translate(-3,0)">S</text><rect x="3" y="13.2" width="11" height="2.8" fill="#fff"/><rect x="7" y="15.5" width="3" height="5.2" fill="#fff"/><path d="M17 12.4 H39.8 M17 12.4 C19 7, 21 3.2, 22.9 3.2 C24.8 3.2, 26.5 8, 28.4 12.4 C30.3 16.8, 32 20.4, 33.9 20.4 C35.8 20.4, 37.8 17, 39.8 12.4" fill="none" stroke="#fff" stroke-width="1.1"/></svg>
<div class="r" style="left:67px;top:627px;width:2px;height:1px;background:#000;"></div>
<div class="r" style="left:67px;top:664px;width:2px;height:1px;background:#000;"></div>
<div class="r" style="left:67px;top:701px;width:2px;height:1px;background:#000;"></div>
<div class="r" style="left:67px;top:738px;width:2px;height:1px;background:#000;"></div>
<div class="r" style="left:67px;top:775px;width:2px;height:1px;background:#000;"></div>
<div class="r" style="left:67px;top:812px;width:2px;height:1px;background:#000;"></div>
<div class="r" style="left:67px;top:849px;width:2px;height:1px;background:#000;"></div>
<div class="r" style="left:67px;top:886px;width:2px;height:1px;background:#000;"></div>
<div class="r" style="left:67px;top:924px;width:2px;height:1px;background:#000;"></div>
<div class="rz" style="left:11px;top:142px;width:28px;height:28px;"></div>
<svg class="a" style="left:11px;top:142px;" width="28" height="28" viewBox="0 0 28 28"><circle cx="10" cy="9.3" r="5.4" fill="none" stroke="#000" stroke-width="1.1"/><circle cx="10" cy="9.3" r="4.4" fill="none" stroke="#fff" stroke-width="1"/><circle cx="10" cy="9.3" r="3.4" fill="none" stroke="#000" stroke-width="1"/><path d="M14 13.5 L21 20.8" stroke="#000" stroke-width="2.2"/></svg>
<div class="rz" style="left:41px;top:142px;width:28px;height:28px;"></div>
<svg class="a" style="left:41px;top:142px;" width="28" height="28" viewBox="0 0 28 28"><circle cx="8.6" cy="8" r="4.3" fill="none" stroke="#000" stroke-width="1.15"/><path d="M7.5 12.3 H9.7 V20.5 L8.6 22.9 L7.5 20.5 Z" fill="#000"/><path d="M15.5 6 V10.8 M17.8 10.8 V6 L21.6 10.8 V6" fill="none" stroke="#000" stroke-width="1.25"/><path d="M12.3 15.6 Q12.4 14.1 14.6 14.1 Q16.9 14.1 16.9 16 Q16.9 17.6 14.8 19.4 L12.3 22.2 H17.3 M18.6 14.1 L23 22.3 M23 14.1 L18.6 22.3" fill="none" stroke="#000" stroke-width="1.25"/></svg>
<div class="rz" style="left:71px;top:142px;width:28px;height:28px;"></div>
<svg class="a" style="left:71px;top:142px;" width="28" height="28" viewBox="0 0 28 28"><circle cx="8.6" cy="8" r="4.3" fill="none" stroke="#000" stroke-width="1.15"/><path d="M7.5 12.3 H9.7 V20.5 L8.6 22.9 L7.5 20.5 Z" fill="#000"/><path d="M13.6 6 V9.8 Q13.6 10.8 14.6 10.8 H16 Q17 10.8 17 9.8 V6 M18 6.5 H23.6 M20.8 6.5 V10.8" fill="none" stroke="#000" stroke-width="1.25"/><path d="M12.3 15.6 Q12.4 14.1 14.6 14.1 Q16.9 14.1 16.9 16 Q16.9 17.6 14.8 19.4 L12.3 22.2 H17.3 M18.6 14.1 L23 22.3 M23 14.1 L18.6 22.3" fill="none" stroke="#000" stroke-width="1.25"/></svg>
<div class="rz" style="left:101px;top:142px;width:28px;height:28px;"></div>
<svg class="a" style="left:101px;top:142px;" width="28" height="28" viewBox="0 0 28 28"><circle cx="8.6" cy="8" r="4.3" fill="none" stroke="#000" stroke-width="1.15"/><path d="M8.3 12.4 Q6.2 16.5 7.6 22.5" fill="none" stroke="#000" stroke-width="2.1"/><path d="M13.6 6 V9.8 Q13.6 10.8 14.6 10.8 H16 Q17 10.8 17 9.8 V6 M18 6.5 H23.6 M20.8 6.5 V10.8" fill="none" stroke="#000" stroke-width="1.25"/><path d="M12.8 15 H10.6 V19.6 M10.6 17.1 H12.4 M13.7 15 V18.8 Q13.7 19.5 14.4 19.5 H15.6 Q16.3 19.5 16.3 18.8 V15 M17.6 15 V19.5 H20.1 M21.2 15 V19.5 H23.8" fill="none" stroke="#000" stroke-width="1.25"/></svg>
<div class="pz" style="left:138px;top:142px;width:28px;height:28px;"></div>
<svg class="a" style="left:138px;top:142px;" width="28" height="28" viewBox="0 0 28 28"><polyline points="5.5,21.5 5.5,19.5 8.5,19.5 8.5,17.5 10,17 10,14.5 11.5,13 11.5,8 12.5,13 14,15.5 15.5,16.5 16.5,18.5 18,19.5 20,19.5 22,21 24,21.5" fill="none" stroke="#000" stroke-width="1.3"/></svg>
<div class="rz" style="left:168px;top:142px;width:28px;height:28px;"></div>
<svg class="a" style="left:168px;top:142px;" width="28" height="28" viewBox="0 0 28 28"><path d="M4.5 22.5 V14.5 H7.5 V22.5 M7.5 11 H10.5 V22.5 M7.5 22.5 V11 M10.5 8 H13.5 V22.5 M10.5 11 V8 M13.5 8.5 H16.5 V22.5 M16.5 11.5 H19.5 V22.5 M19.5 13.5 H22.5 V22.5" fill="none" stroke="#000" stroke-width="1.3"/></svg>
<div class="rz" style="left:205px;top:142px;width:28px;height:28px;"></div>
<svg class="a" style="left:205px;top:142px;" width="28" height="28" viewBox="0 0 28 28"><rect x="3" y="3" width="21" height="21" fill="#000"/><rect x="4" y="7" width="19" height="16" fill="#fff"/><path d="M6 5 H19.5" stroke="#d8d8d8" stroke-width="1.3" stroke-dasharray="1 0.6"/><rect x="4.2" y="4.2" width="1" height="1.8" fill="#d0d0d0"/><rect x="21.2" y="4.2" width="1.6" height="1.6" fill="#d8d8d8"/><rect x="7.6" y="8.6" width="14" height="2.8" fill="none" stroke="#000" stroke-width="1.3"/><rect x="13.6" y="13.6" width="8" height="2.8" fill="none" stroke="#000" stroke-width="1.3"/><rect x="13.6" y="18.6" width="8" height="2.8" fill="none" stroke="#000" stroke-width="1.3"/><path d="M6.3 14.3 L7.5 15.5 M9.5 14.2 V15.8 M11.5 14.5 V15" stroke="#000" stroke-width="1"/><path d="M6.3 20.5 L7.5 19.3 L8.5 20.5 M10.5 19.3 V20.9" stroke="#000" stroke-width="1"/></svg>
<div class="rz" style="left:242px;top:142px;width:28px;height:28px;"></div>
<svg class="a" style="left:242px;top:142px;" width="28" height="28" viewBox="0 0 28 28"><path d="M5.5 3 V22.5 H22" fill="none" stroke="#000" stroke-width="1.2"/><path d="M9 4.5 H18 M9 20.5 H18 M13.5 5 V11.5 M13.5 13.5 V20" fill="none" stroke="#000" stroke-width="1.2"/><path d="M10.8 7.8 L13.5 5.5 L16.2 7.8 Z M10.8 17.2 L13.5 19.5 L16.2 17.2 Z" fill="#000"/></svg>
<div class="t" style="left:279px;top:151.14px;font-size:12px;line-height:12px;color:#000;">Plot Top:</div>
<div class="edit" style="left:330px;top:146px;width:44px;height:20px;"></div>
<div class="t" style="left:331.5px;top:151.14px;font-size:12px;line-height:12px;color:#000;">35.00</div>
<div class="r" style="left:376px;top:146px;width:12px;height:10px;background:#ece9ec;border-left:1px solid #fff;border-top:1px solid #fff;border-right:2px solid #a0a0a0;border-bottom:2px solid #a0a0a0;"></div>
<div class="r" style="left:376px;top:156px;width:12px;height:10px;background:#ece9ec;border-left:1px solid #fff;border-top:1px solid #fff;border-right:2px solid #a0a0a0;border-bottom:2px solid #a0a0a0;"></div>
<svg class="a" style="left:379px;top:149px;" width="6" height="4" viewBox="0 0 6 4"><path d="M0.5 3.5 L3 1 L5.5 3.5 Z" fill="#000"/></svg>
<svg class="a" style="left:379px;top:158px;" width="6" height="4" viewBox="0 0 6 4"><path d="M0.5 0.5 L3 3 L5.5 0.5 Z" fill="#000"/></svg>
<div class="t" style="left:397px;top:151.14px;font-size:12px;line-height:12px;color:#000;">Plot Range:</div>
<div class="edit" style="left:464px;top:146px;width:44px;height:20px;"></div>
<div class="t" style="left:465.5px;top:151.14px;font-size:12px;line-height:12px;color:#000;">70.0</div>
<div class="r" style="left:510px;top:146px;width:12px;height:10px;background:#ece9ec;border-left:1px solid #fff;border-top:1px solid #fff;border-right:2px solid #a0a0a0;border-bottom:2px solid #a0a0a0;"></div>
<div class="r" style="left:510px;top:156px;width:12px;height:10px;background:#ece9ec;border-left:1px solid #fff;border-top:1px solid #fff;border-right:2px solid #a0a0a0;border-bottom:2px solid #a0a0a0;"></div>
<svg class="a" style="left:513px;top:149px;" width="6" height="4" viewBox="0 0 6 4"><path d="M0.5 3.5 L3 1 L5.5 3.5 Z" fill="#000"/></svg>
<svg class="a" style="left:513px;top:158px;" width="6" height="4" viewBox="0 0 6 4"><path d="M0.5 0.5 L3 3 L5.5 0.5 Z" fill="#000"/></svg>
<div class="rz" style="left:11px;top:578px;width:28px;height:28px;"></div>
<svg class="a" style="left:11px;top:578px;" width="28" height="28" viewBox="0 0 28 28"><circle cx="10" cy="9.3" r="5.4" fill="none" stroke="#000" stroke-width="1.1"/><circle cx="10" cy="9.3" r="4.4" fill="none" stroke="#fff" stroke-width="1"/><circle cx="10" cy="9.3" r="3.4" fill="none" stroke="#000" stroke-width="1"/><path d="M14 13.5 L21 20.8" stroke="#000" stroke-width="2.2"/></svg>
<div class="rz" style="left:41px;top:578px;width:28px;height:28px;"></div>
<svg class="a" style="left:41px;top:578px;" width="28" height="28" viewBox="0 0 28 28"><circle cx="8.6" cy="8" r="4.3" fill="none" stroke="#000" stroke-width="1.15"/><path d="M7.5 12.3 H9.7 V20.5 L8.6 22.9 L7.5 20.5 Z" fill="#000"/><path d="M15.5 6 V10.8 M17.8 10.8 V6 L21.6 10.8 V6" fill="none" stroke="#000" stroke-width="1.25"/><path d="M12.3 15.6 Q12.4 14.1 14.6 14.1 Q16.9 14.1 16.9 16 Q16.9 17.6 14.8 19.4 L12.3 22.2 H17.3 M18.6 14.1 L23 22.3 M23 14.1 L18.6 22.3" fill="none" stroke="#000" stroke-width="1.25"/></svg>
<div class="rz" style="left:71px;top:578px;width:28px;height:28px;"></div>
<svg class="a" style="left:71px;top:578px;" width="28" height="28" viewBox="0 0 28 28"><circle cx="8.6" cy="8" r="4.3" fill="none" stroke="#000" stroke-width="1.15"/><path d="M7.5 12.3 H9.7 V20.5 L8.6 22.9 L7.5 20.5 Z" fill="#000"/><path d="M13.6 6 V9.8 Q13.6 10.8 14.6 10.8 H16 Q17 10.8 17 9.8 V6 M18 6.5 H23.6 M20.8 6.5 V10.8" fill="none" stroke="#000" stroke-width="1.25"/><path d="M12.3 15.6 Q12.4 14.1 14.6 14.1 Q16.9 14.1 16.9 16 Q16.9 17.6 14.8 19.4 L12.3 22.2 H17.3 M18.6 14.1 L23 22.3 M23 14.1 L18.6 22.3" fill="none" stroke="#000" stroke-width="1.25"/></svg>
<div class="rz" style="left:101px;top:578px;width:28px;height:28px;"></div>
<svg class="a" style="left:101px;top:578px;" width="28" height="28" viewBox="0 0 28 28"><circle cx="8.6" cy="8" r="4.3" fill="none" stroke="#000" stroke-width="1.15"/><path d="M8.3 12.4 Q6.2 16.5 7.6 22.5" fill="none" stroke="#000" stroke-width="2.1"/><path d="M13.6 6 V9.8 Q13.6 10.8 14.6 10.8 H16 Q17 10.8 17 9.8 V6 M18 6.5 H23.6 M20.8 6.5 V10.8" fill="none" stroke="#000" stroke-width="1.25"/><path d="M12.8 15 H10.6 V19.6 M10.6 17.1 H12.4 M13.7 15 V18.8 Q13.7 19.5 14.4 19.5 H15.6 Q16.3 19.5 16.3 18.8 V15 M17.6 15 V19.5 H20.1 M21.2 15 V19.5 H23.8" fill="none" stroke="#000" stroke-width="1.25"/></svg>
<div class="rz" style="left:145px;top:578px;width:28px;height:28px;"></div>
<svg class="a" style="left:145px;top:578px;" width="28" height="28" viewBox="0 0 28 28"><rect x="3" y="3" width="21" height="21" fill="#000"/><rect x="4" y="7" width="19" height="16" fill="#fff"/><path d="M6 5 H19.5" stroke="#d8d8d8" stroke-width="1.3" stroke-dasharray="1 0.6"/><rect x="4.2" y="4.2" width="1" height="1.8" fill="#d0d0d0"/><rect x="21.2" y="4.2" width="1.6" height="1.6" fill="#d8d8d8"/><rect x="7.6" y="8.6" width="14" height="2.8" fill="none" stroke="#000" stroke-width="1.3"/><rect x="13.6" y="13.6" width="8" height="2.8" fill="none" stroke="#000" stroke-width="1.3"/><rect x="13.6" y="18.6" width="8" height="2.8" fill="none" stroke="#000" stroke-width="1.3"/><path d="M6.3 14.3 L7.5 15.5 M9.5 14.2 V15.8 M11.5 14.5 V15" stroke="#000" stroke-width="1"/><path d="M6.3 20.5 L7.5 19.3 L8.5 20.5 M10.5 19.3 V20.9" stroke="#000" stroke-width="1"/></svg>
<div class="t" style="left:181.8px;top:586.84px;font-size:12px;line-height:12px;color:#000;">Plot Top:</div>
<div class="edit" style="left:232.5px;top:581.5px;width:44px;height:20px;"></div>
<div class="t" style="left:235px;top:586.84px;font-size:12px;line-height:12px;color:#000;">180.0</div>
<div class="r" style="left:279px;top:582px;width:12px;height:10px;background:#ece9ec;border-left:1px solid #fff;border-top:1px solid #fff;border-right:2px solid #a0a0a0;border-bottom:2px solid #a0a0a0;"></div>
<div class="r" style="left:279px;top:592px;width:12px;height:10px;background:#ece9ec;border-left:1px solid #fff;border-top:1px solid #fff;border-right:2px solid #a0a0a0;border-bottom:2px solid #a0a0a0;"></div>
<svg class="a" style="left:282px;top:585px;" width="6" height="4" viewBox="0 0 6 4"><path d="M0.5 3.5 L3 1 L5.5 3.5 Z" fill="#000"/></svg>
<svg class="a" style="left:282px;top:594px;" width="6" height="4" viewBox="0 0 6 4"><path d="M0.5 0.5 L3 3 L5.5 0.5 Z" fill="#000"/></svg>
<div class="t" style="left:823.5px;top:178.04px;font-size:12px;line-height:12px;color:#000;"><u style="text-underline-offset:1px">Overlays</u></div>
<div class="t" style="left:809px;top:199px;font-size:12px;line-height:12px;transform:translate(-50%,-50%) rotate(-90deg);">Set</div>
<div class="t" style="left:824.5px;top:201.5px;font-size:12px;line-height:12px;transform:translate(-50%,-50%) rotate(-90deg);">On</div>
<div class="r" style="left:802px;top:212px;width:14px;height:14px;background:#ece9ec;border-left:1px solid #fff;border-top:1px solid #fff;border-right:2px solid #808080;border-bottom:2px solid #808080;"></div>
<div class="t" style="left:805.5px;top:212.84px;font-size:12px;line-height:12px;color:#000;">1</div>
<div class="r" style="left:819px;top:212px;width:13px;height:14px;background:#fff;border-left:2px solid #a8a8a8;border-top:2px solid #a8a8a8;border-right:1px solid #f8f8f8;border-bottom:1px solid #f8f8f8;"></div>
<div class="t" style="left:835.5px;top:213.93px;font-size:11.3px;line-height:11.3px;color:#ff0000;">Overlay 1</div>
<div class="r" style="left:802px;top:228px;width:14px;height:14px;background:#ece9ec;border-left:1px solid #fff;border-top:1px solid #fff;border-right:2px solid #808080;border-bottom:2px solid #808080;"></div>
<div class="t" style="left:805.5px;top:228.84px;font-size:12px;line-height:12px;color:#000;">2</div>
<div class="r" style="left:819px;top:228px;width:13px;height:14px;background:#fff;border-left:2px solid #a8a8a8;border-top:2px solid #a8a8a8;border-right:1px solid #f8f8f8;border-bottom:1px solid #f8f8f8;"></div>
<div class="t" style="left:835.5px;top:229.93px;font-size:11.3px;line-height:11.3px;color:#ff00ff;">Overlay 2</div>
<div class="r" style="left:802px;top:244px;width:14px;height:14px;background:#ece9ec;border-left:1px solid #fff;border-top:1px solid #fff;border-right:2px solid #808080;border-bottom:2px solid #808080;"></div>
<div class="t" style="left:805.5px;top:244.84px;font-size:12px;line-height:12px;color:#000;">3</div>
<div class="r" style="left:819px;top:244px;width:13px;height:14px;background:#fff;border-left:2px solid #a8a8a8;border-top:2px solid #a8a8a8;border-right:1px solid #f8f8f8;border-bottom:1px solid #f8f8f8;"></div>
<div class="t" style="left:835.5px;top:245.93px;font-size:11.3px;line-height:11.3px;color:#0000ff;">Overlay 3</div>
<div class="r" style="left:802px;top:260px;width:14px;height:14px;background:#ece9ec;border-left:1px solid #fff;border-top:1px solid #fff;border-right:2px solid #808080;border-bottom:2px solid #808080;"></div>
<div class="t" style="left:805.5px;top:260.84px;font-size:12px;line-height:12px;color:#000;">4</div>
<div class="r" style="left:819px;top:260px;width:13px;height:14px;background:#fff;border-left:2px solid #a8a8a8;border-top:2px solid #a8a8a8;border-right:1px solid #f8f8f8;border-bottom:1px solid #f8f8f8;"></div>
<div class="t" style="left:835.5px;top:261.93px;font-size:11.3px;line-height:11.3px;color:#00ffff;">Overlay 4</div>
<div class="r" style="left:799px;top:278px;width:64px;height:17px;background:#ece9ec;border-left:1px solid #fff;border-top:1px solid #fff;border-right:2px solid #808080;border-bottom:2px solid #808080;"></div>
<div class="t" style="left:805px;top:280.34px;font-size:12px;line-height:12px;color:#000;">Options...</div>
<div class="r" style="left:5px;top:975px;width:898px;height:23px;background:#ece9ec;border-top:1px solid #fff;border-bottom:1px solid #fff;"></div>
<div class="r" style="left:5px;top:974px;width:898px;height:1px;background:#000;"></div>
<div class="r" style="left:5px;top:998px;width:898px;height:1px;background:#000;"></div>
<div class="sunk" style="left:7.5px;top:978px;width:118.5px;height:17px;"></div>
<div class="t" style="left:12.5px;top:980.84px;font-size:12px;line-height:12px;color:#000;">Stopped</div>
<div class="sunk" style="left:128.5px;top:978px;width:99.0px;height:17px;"></div>
<div class="t" style="left:132.5px;top:980.84px;font-size:12px;line-height:12px;color:#000;">Real Time</div>
<div class="sunk" style="left:231px;top:978px;width:70.5px;height:17px;"></div>
<div class="t" style="left:235px;top:980.84px;font-size:12px;line-height:12px;color:#000;">96000 Hz</div>
<div class="sunk" style="left:304px;top:978px;width:49.5px;height:17px;"></div>
<div class="t" style="left:308.5px;top:980.84px;font-size:12px;line-height:12px;color:#000;">16 Bit</div>
<div class="sunk" style="left:356.5px;top:978px;width:61.0px;height:17px;"></div>
<div class="t" style="left:361px;top:980.84px;font-size:12px;line-height:12px;color:#000;">Stereo</div>
<div class="sunk" style="left:420px;top:978px;width:100.5px;height:17px;"></div>
<div class="t" style="left:424px;top:980.84px;font-size:12px;line-height:12px;color:#000;">FFT 65536 pts</div>
<div class="sunk" style="left:523px;top:978px;width:73.5px;height:17px;"></div>
<div class="t" style="left:527px;top:980.84px;font-size:12px;line-height:12px;color:#000;">Flat top</div>
</body></html>
